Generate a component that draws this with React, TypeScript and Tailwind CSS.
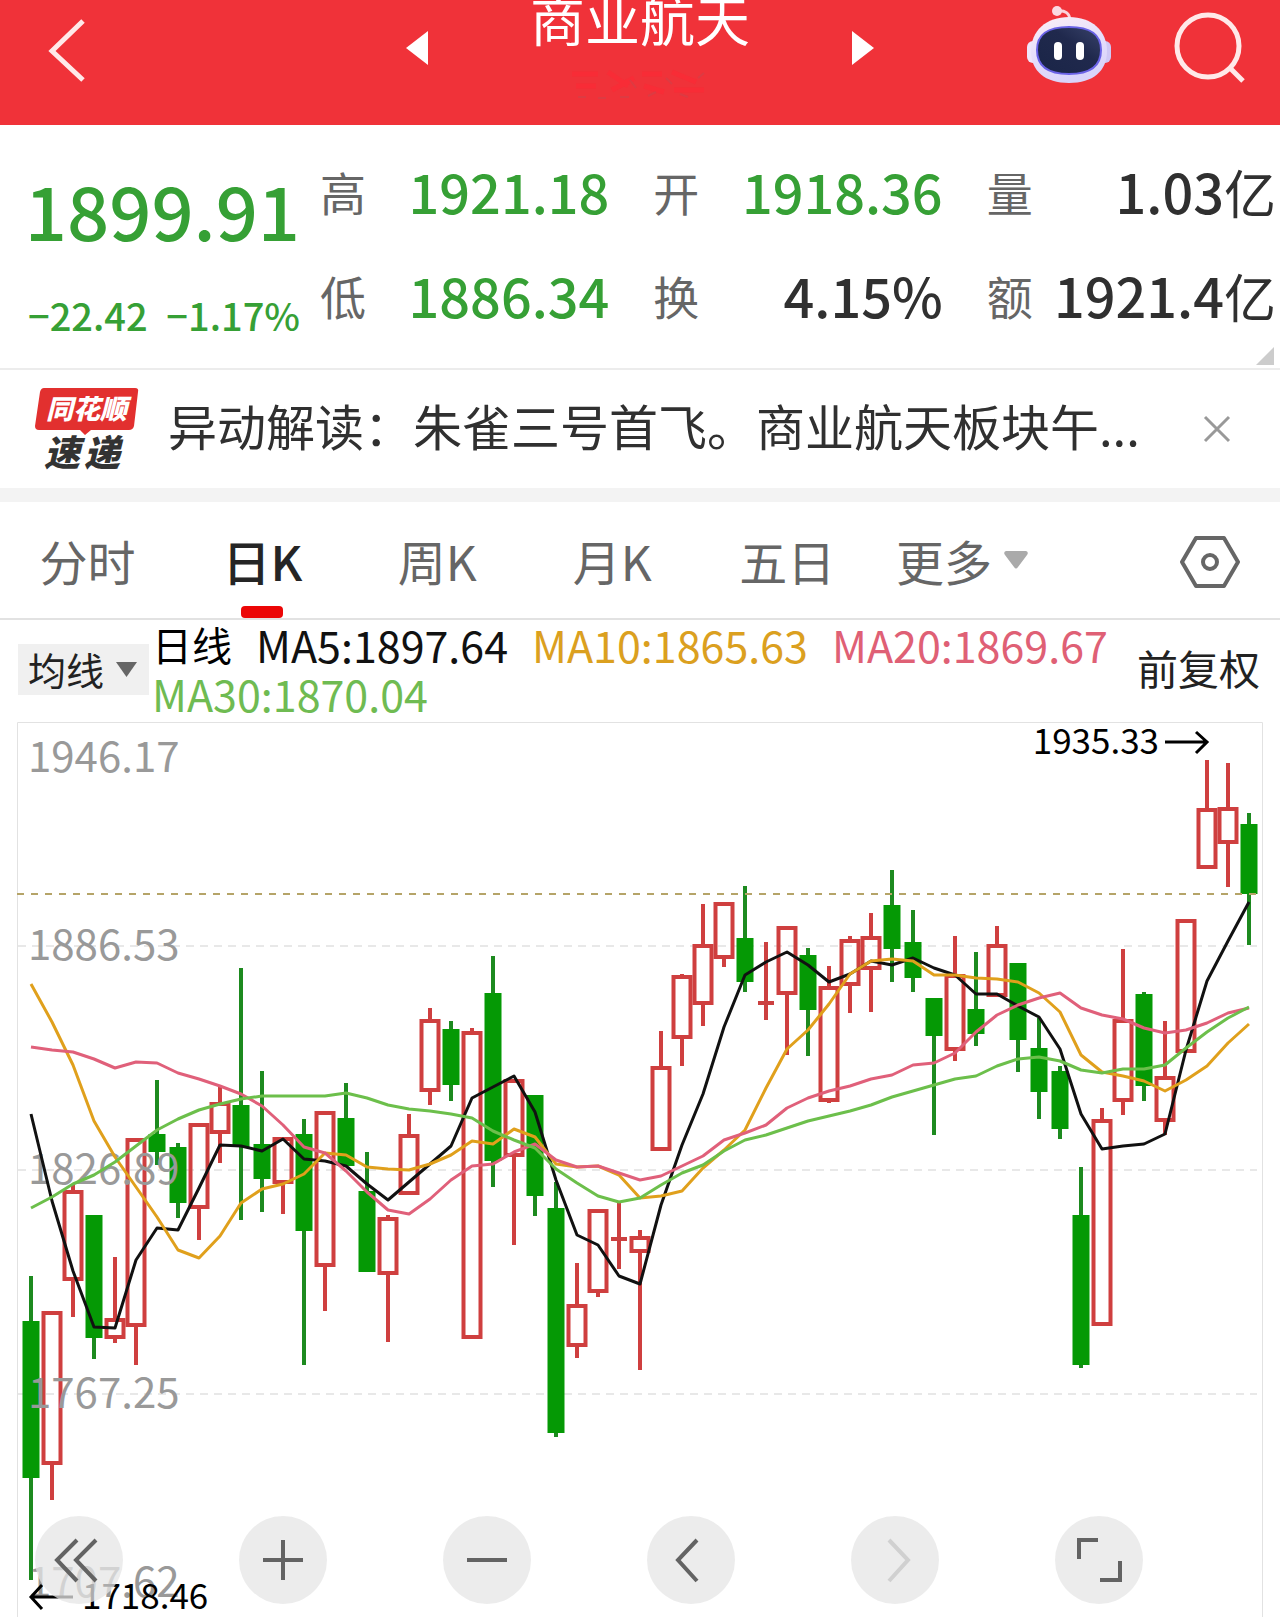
import type { ReactNode } from "react";

type Candle = {
  up: boolean;
  high: number;
  top: number;
  bottom: number;
  low: number;
};

const FONT = '"Noto Sans CJK SC", "Noto Sans", sans-serif';
const FIRST_X = 31;
const STEP = 21;

const c = (
  kind: "up" | "down",
  high: number,
  top: number,
  bottom: number,
  low: number
): Candle => ({ up: kind === "up", high, top, bottom, low });

// high, body top, body bottom, low in chart units
const candles: Candle[] = [
  c("down", 1276, 1321, 1478, 1580),
  c("up", 1311, 1311, 1465, 1500),
  c("up", 1184, 1190, 1281, 1317),
  c("down", 1215, 1215, 1338, 1359),
  c("up", 1257, 1318, 1339, 1343),
  c("up", 1138, 1138, 1327, 1365),
  c("down", 1080, 1134, 1152, 1165),
  c("down", 1143, 1147, 1203, 1218),
  c("up", 1123, 1123, 1209, 1240),
  c("up", 1087, 1102, 1134, 1163),
  c("down", 968, 1105, 1147, 1220),
  c("down", 1071, 1144, 1179, 1212),
  c("up", 1137, 1137, 1184, 1214),
  c("down", 1119, 1134, 1231, 1365),
  c("up", 1111, 1111, 1267, 1311),
  c("down", 1083, 1118, 1166, 1166),
  c("down", 1152, 1191, 1272, 1272),
  c("up", 1215, 1217, 1275, 1342),
  c("up", 1114, 1134, 1195, 1195),
  c("up", 1008, 1019, 1092, 1105),
  c("down", 1021, 1029, 1085, 1101),
  c("up", 1028, 1031, 1339, 1339),
  c("down", 956, 993, 1161, 1187),
  c("up", 1079, 1079, 1157, 1245),
  c("down", 1095, 1095, 1196, 1216),
  c("down", 1182, 1208, 1433, 1437),
  c("up", 1263, 1304, 1347, 1358),
  c("up", 1209, 1209, 1293, 1297),
  c("up", 1201, 1239, 1239, 1269),
  c("up", 1230, 1236, 1253, 1370),
  c("up", 1031, 1066, 1151, 1151),
  c("up", 974, 975, 1039, 1066),
  c("up", 904, 944, 1005, 1026),
  c("up", 902, 902, 959, 967),
  c("down", 886, 938, 982, 992),
  c("up", 942, 1003, 1003, 1020),
  c("up", 926, 926, 995, 1055),
  c("down", 948, 955, 1010, 1056),
  c("up", 966, 986, 1102, 1103),
  c("up", 936, 939, 986, 1013),
  c("up", 913, 936, 970, 1012),
  c("down", 870, 905, 949, 982),
  c("down", 910, 942, 978, 992),
  c("down", 998, 998, 1036, 1135),
  c("up", 936, 974, 1051, 1061),
  c("down", 952, 1009, 1034, 1046),
  c("up", 926, 944, 997, 997),
  c("down", 963, 963, 1040, 1072),
  c("down", 1018, 1048, 1092, 1119),
  c("down", 1066, 1071, 1129, 1139),
  c("down", 1167, 1215, 1365, 1368),
  c("up", 1108, 1119, 1326, 1326),
  c("up", 949, 1019, 1102, 1115),
  c("down", 992, 994, 1086, 1101),
  c("up", 1021, 1076, 1122, 1135),
  c("up", 919, 919, 1053, 1053),
  c("up", 760, 808, 869, 869),
  c("up", 763, 807, 844, 887),
  c("down", 813, 824, 894, 945),
];

const averages = [
  {
    name: "MA5",
    value: "1897.64",
    text: "text-[#111111]",
    stroke: "#111111",
    points: [
      1114, 1201, 1271, 1327, 1328, 1260, 1228, 1230, 1188, 1145, 1146, 1151,
      1139, 1159, 1161, 1166, 1184, 1200, 1182, 1164, 1146, 1098, 1087, 1076,
      1112, 1180, 1235, 1245, 1276, 1284, 1205, 1145, 1094, 1027, 975, 962, 952,
      965, 982, 974, 961, 965, 958, 968, 975, 994, 994, 1006, 1017, 1049, 1114,
      1149, 1146, 1144, 1134, 1050, 981, 941, 902,
    ],
  },
  {
    name: "MA10",
    value: "1865.63",
    text: "text-[#dba01f]",
    stroke: "#e0a01c",
    points: [
      984, 1022, 1065, 1121, 1157, 1187, 1217, 1250, 1258, 1236, 1203, 1189,
      1184, 1174, 1153, 1155, 1167, 1169, 1170, 1164, 1155, 1141, 1144, 1129,
      1137, 1164, 1167, 1166, 1175, 1198, 1196, 1191, 1168, 1150, 1130, 1088,
      1049, 1030, 1004, 974, 961, 959, 961, 975, 975, 978, 979, 982, 993, 1012,
      1055, 1072, 1076, 1081, 1091, 1080, 1066, 1043, 1024,
    ],
  },
  {
    name: "MA20",
    value: "1869.67",
    text: "text-[#df6075]",
    stroke: "#e0607a",
    points: [
      1047, 1050, 1052, 1059, 1068, 1062, 1063, 1073, 1079, 1086, 1094, 1106,
      1125, 1147, 1153, 1171, 1192, 1210, 1214, 1199, 1180, 1166, 1164, 1152,
      1144, 1160, 1167, 1166, 1173, 1180, 1176, 1166, 1156, 1140, 1133, 1125,
      1108, 1098, 1091, 1086, 1079, 1075, 1065, 1063, 1053, 1032, 1015, 1005,
      998, 993, 1008, 1015, 1019, 1028, 1033, 1030, 1023, 1013, 1008,
    ],
  },
  {
    name: "MA30",
    value: "1870.04",
    text: "text-[#6fbb52]",
    stroke: "#6cbf4b",
    points: [
      1208, 1197, 1184, 1175, 1162, 1146, 1130, 1119, 1110, 1104, 1099, 1096,
      1096, 1096, 1096, 1093, 1098, 1105, 1109, 1111, 1114, 1118, 1131, 1140,
      1148, 1169, 1183, 1196, 1202, 1198, 1185, 1173, 1165, 1151, 1140, 1135,
      1128, 1121, 1116, 1111, 1105, 1097, 1091, 1085, 1079, 1076, 1066, 1059,
      1057, 1061, 1070, 1073, 1069, 1069, 1065, 1048, 1032, 1018, 1007,
    ],
  },
];

const axisLabels = [
  { text: "1946.17", y: 772 },
  { text: "1886.53", y: 960 },
  { text: "1826.89", y: 1184 },
  { text: "1767.25", y: 1408 },
  { text: "1707.62", y: 1597 },
];

const quotes = [
  { label: "高", value: "1921.18", unit: "", color: "text-[#36a035]" },
  { label: "开", value: "1918.36", unit: "", color: "text-[#36a035]" },
  { label: "量", value: "1.03", unit: "亿", color: "text-[#303030]" },
  { label: "低", value: "1886.34", unit: "", color: "text-[#36a035]" },
  { label: "换", value: "4.15%", unit: "", color: "text-[#303030]" },
  { label: "额", value: "1921.4", unit: "亿", color: "text-[#303030]" },
];

const tabs = ["分时", "日K", "周K", "月K", "五日"];

const Header = () => (
  <header className="grid h-[125px] grid-cols-[1fr_468px_1fr] overflow-hidden bg-[#f03239] text-white">
    <div className="pt-4 pl-12">
      <button type="button" aria-label="返回" className="block">
        <svg width="40" height="68" viewBox="0 0 40 68" fill="none">
          <path d="M35 5 4 35 35 64" stroke="#ffe9e9" strokeWidth="5" />
        </svg>
      </button>
    </div>
    <div className="flex items-start justify-between">
      <button type="button" aria-label="上一个" className="pt-[31px]">
        <svg width="22" height="34" viewBox="0 0 22 34">
          <path d="M0 17 22 0V34Z" fill="#fff" />
        </svg>
      </button>
      <div className="flex flex-col items-center">
        <h1 className="text-[55px] leading-[34px] whitespace-nowrap">
          商业航天
        </h1>
        <svg
          className="mt-8"
          width="144"
          height="36"
          viewBox="0 0 144 36"
          fill="none"
          aria-hidden="true"
        >
          <g stroke="#fb2a35" strokeWidth="5" opacity="0.7">
            <path d="M4 8h26M8 20h20M40 6l20 14M44 24l22-12M74 8h20M76 20l20 6M104 6l24 10M106 24h30" />
          </g>
          <g stroke="#c9444c" strokeWidth="2" opacity="0.5">
            <path d="M10 31h8M30 32h8M52 31h9M62 14l6 8M80 30l8-4M98 12l6 6M112 28l8 3M130 12l6-5" />
          </g>
        </svg>
      </div>
      <button type="button" aria-label="下一个" className="pt-[31px]">
        <svg width="22" height="34" viewBox="0 0 22 34">
          <path d="M22 17 0 0V34Z" fill="#fff" />
        </svg>
      </button>
    </div>
    <div className="flex items-start justify-end gap-[62px] pr-[34px]">
      <button type="button" aria-label="智能助手" className="pt-1">
        <svg width="86" height="80" viewBox="0 0 86 80">
          <defs>
            <linearGradient id="shell" x1="0" y1="0" x2="0.4" y2="1">
              <stop offset="0" stopColor="#fdeff6" />
              <stop offset="0.55" stopColor="#e6defb" />
              <stop offset="1" stopColor="#d9d4fa" />
            </linearGradient>
            <linearGradient id="visor" x1="0" y1="1" x2="1" y2="0">
              <stop offset="0" stopColor="#1a2547" />
              <stop offset="0.6" stopColor="#20294d" />
              <stop offset="1" stopColor="#39436b" />
            </linearGradient>
          </defs>
          <path
            d="M31 7c8-1 13 2 13 10"
            fill="none"
            stroke="#fbd3dc"
            strokeWidth="3"
          />
          <circle cx="31" cy="7" r="5" fill="#fbd9e2" />
          <rect x="1" y="37" width="12" height="22" rx="6" fill="#efe6fb" />
          <rect x="73" y="37" width="12" height="22" rx="6" fill="#cfc8f5" />
          <path
            d="M43 13C66 13 81 27 81 47S67 79 43 79 5 67 5 47 20 13 43 13Z"
            fill="url(#shell)"
          />
          <path
            d="M43 23c20 0 32 6 32 23s-12 24-32 24-32-7-32-24 12-23 32-23Z"
            fill="url(#visor)"
            stroke="#6a62e6"
            strokeWidth="2"
          />
          <rect x="28" y="38" width="8" height="18" rx="4" fill="#fff" />
          <rect x="50" y="38" width="8" height="18" rx="4" fill="#fff" />
        </svg>
      </button>
      <button type="button" aria-label="搜索" className="pt-[10px]">
        <svg width="72" height="74" viewBox="0 0 72 74" fill="none">
          <g stroke="#ffe9e9" strokeWidth="5">
            <circle cx="34" cy="36" r="31" />
            <path d="M56 58 69 71" />
          </g>
        </svg>
      </button>
    </div>
  </header>
);

const QuotePanel = () => (
  <section className="relative flex border-b-2 border-[#ececec] pt-3 pb-[3px]">
    <div className="w-[320px] shrink-0 pr-5 text-[#36a035]">
      <div className="pt-4 text-right text-[74px] leading-[112px] font-medium">
        1899.91
      </div>
      <div className="flex justify-between pl-7 text-[38px] leading-[100px] font-medium">
        <span>−22.42</span>
        <span>−1.17%</span>
      </div>
    </div>
    <dl className="grid flex-1 grid-cols-3 content-start gap-x-11 pt-[2px] pr-1">
      {quotes.map((q) => (
        <div
          key={q.label}
          className="flex h-[104px] items-center justify-between whitespace-nowrap"
        >
          <dt className="text-[46px] leading-[64px] text-[#666666]">
            {q.label}
          </dt>
          <dd className={`text-[54px] leading-[64px] font-medium ${q.color}`}>
            {q.value}
            {q.unit && (
              <span className="text-[52px] leading-none font-normal">
                {q.unit}
              </span>
            )}
          </dd>
        </div>
      ))}
    </dl>
    <svg
      className="absolute right-[6px] bottom-[3px]"
      width="18"
      height="18"
      viewBox="0 0 18 18"
      aria-hidden="true"
    >
      <path d="M18 0V18H0Z" fill="#cccccc" />
    </svg>
  </section>
);

const NewsBar = () => (
  <section className="box-content flex h-[118px] items-center border-b-[14px] border-[#f3f3f3] pl-[35px]">
    <svg width="104" height="90" viewBox="0 0 104 90" className="shrink-0">
      <path
        d="M9 4H100Q104 4 103 8L99 42Q98 46 94 46H56L50 51 45 46H4Q0 46 0 42L5 8Q6 4 9 4Z"
        fill="#e2302f"
      />
      <g fontFamily={FONT} fontStyle="italic" fontWeight="900">
        <text x="11" y="35" fontSize="27" fill="#fff">
          同花顺
        </text>
        <text x="9" y="82" fontSize="36" fill="#333333">
          速
        </text>
        <text x="49" y="82" fontSize="36" fill="#333333">
          递
        </text>
      </g>
    </svg>
    <a
      href="#news"
      className="ml-[29px] min-w-0 flex-1 overflow-hidden pb-2 text-[49px] leading-[72px] whitespace-nowrap text-[#303030]"
    >
      异动解读：朱雀三号首飞。商业航天板块午...
    </a>
    <button type="button" aria-label="关闭" className="mr-[49px] ml-4">
      <svg width="28" height="28" viewBox="0 0 28 28" fill="none">
        <path d="M2 2 26 26M26 2 2 26" stroke="#999999" strokeWidth="3" />
      </svg>
    </button>
  </section>
);

const TabBar = () => (
  <nav className="flex items-center justify-between border-b-2 border-[#e2e2e2] text-[48px]">
    <div className="grid w-[82%] grid-cols-6">
      {tabs.map((t) => (
        <button
          key={t}
          type="button"
          className={
            t === "日K"
              ? "flex flex-col items-center font-medium text-[#252525]"
              : "flex flex-col items-center text-[#666666]"
          }
        >
          <span className="pt-3 leading-[92px]">{t}</span>
          {t === "日K" && (
            <span className="h-3 w-[42px] rounded-sm bg-[#ec0606]" />
          )}
        </button>
      ))}
      <button
        type="button"
        className="flex items-center justify-center gap-3 pb-3 text-[#666666]"
      >
        <span className="pt-3 leading-[92px] whitespace-nowrap">更多</span>
        <svg width="24" height="18" viewBox="0 0 24 18" className="mt-3">
          <path
            d="M2 0H22Q25 1 23 4L14 16Q12 19 10 16L1 4Q-1 1 2 0Z"
            fill="#aaaaaa"
          />
        </svg>
      </button>
    </div>
    <button type="button" aria-label="设置" className="mt-1 mr-10">
      <svg width="60" height="54" viewBox="0 0 60 54" fill="none">
        <g stroke="#666666" strokeWidth="4" strokeLinejoin="round">
          <path d="M16 3H44L58 27 44 51H16L2 27Z" />
          <circle cx="30" cy="27" r="7" />
        </g>
      </svg>
    </button>
  </nav>
);

const Legend = () => (
  <section className="flex items-center pr-5 pb-1 pl-[18px]">
    <button
      type="button"
      className="flex h-[51px] w-[131px] shrink-0 items-center justify-between bg-[#f0f0f0] pr-3 pl-[10px] text-[38px] leading-[48px] text-[#222222]"
    >
      均线
      <svg width="21" height="15" viewBox="0 0 21 15">
        <path d="M0 0H21L10.5 15Z" fill="#666666" />
      </svg>
    </button>
    <div className="flex flex-1 flex-wrap gap-x-6 pl-[3px] text-[43px] leading-[49px] whitespace-nowrap">
      <span className="text-[40px] text-black">日线</span>
      {averages.map((a) => (
        <span key={a.name} className={a.text}>
          {a.name}:{a.value}
        </span>
      ))}
    </div>
    <button
      type="button"
      className="pb-1 text-[41px] leading-[48px] text-[#222222]"
    >
      前复权
    </button>
  </section>
);

const CandleShape = ({ candle, x }: { candle: Candle; x: number }) => {
  const { up, high, top, bottom, low } = candle;
  if (!up) {
    return (
      <g fill="#059905">
        <rect x={x - 2} y={high} width="4" height={low - high} fill="#1d8a1f" />
        <rect x={x - 8.5} y={top} width="17" height={bottom - top} />
      </g>
    );
  }
  if (top === bottom) {
    return (
      <g stroke="#cc4040" strokeWidth="4">
        <path d={`M${x} ${high}V${low}M${x - 8} ${top}H${x + 8}`} />
      </g>
    );
  }
  return (
    <g stroke="#cf3f3f" strokeWidth="4" fill="none">
      <path d={`M${x} ${high}V${top + 1}M${x} ${bottom - 1}V${low}`} />
      <rect x={x - 8.5} y={top + 2} width="17" height={bottom - top - 4} />
    </g>
  );
};

const KLineChart = () => (
  <svg
    viewBox="0 722 1280 895"
    className="block w-full"
    fill="none"
    role="img"
    aria-label="日K线图"
  >
    <path d="M17.5 1617V722.5H1262.5V1617" stroke="#e2e2e2" />
    <g stroke="#e8e8e8" strokeWidth="2" strokeDasharray="8 6">
      <path d="M18 946H1257M18 1170H1257M18 1394H1257" />
    </g>
    {candles.map((candle, i) => (
      <CandleShape key={i} candle={candle} x={FIRST_X + i * STEP} />
    ))}
    <path
      d="M17 894H1257"
      stroke="#b5a468"
      strokeWidth="2"
      strokeDasharray="7 7"
    />
    <g fontFamily={FONT} fontSize="42" fill="#999999">
      {axisLabels.map((l) => (
        <text key={l.text} x="28" y={l.y}>
          {l.text}
        </text>
      ))}
    </g>
    {averages.map((a) => (
      <polyline
        key={a.name}
        points={a.points.map((y, i) => `${FIRST_X + i * STEP},${y}`).join(" ")}
        stroke={a.stroke}
        strokeWidth="3"
        strokeLinejoin="round"
      />
    ))}
    <g fontFamily={FONT} fontSize="35" fill="#000">
      <text x="1159" y="754" textAnchor="end">
        1935.33
      </text>
      <text x="82" y="1609">
        1718.46
      </text>
    </g>
    <g stroke="#000" strokeWidth="3">
      <path d="M1165 742H1207M1196 732 1207 742 1196 753" />
      <path d="M73 1597H31M42 1585 31 1597 42 1609" />
    </g>
  </svg>
);

const RoundButton = ({
  label,
  disabled,
  children,
}: {
  label: string;
  disabled?: boolean;
  children: ReactNode;
}) => (
  <button
    type="button"
    aria-label={label}
    disabled={disabled}
    className="size-[88px] rounded-full bg-[#e6e6e6]/75"
  >
    <svg
      viewBox="0 0 88 88"
      fill="none"
      stroke={disabled ? "#d0d0d0" : "#636363"}
      strokeWidth="4"
    >
      {children}
    </svg>
  </button>
);

const ChartControls = () => (
  <div className="absolute right-[137px] bottom-[13px] left-[35px] flex justify-between">
    <RoundButton label="展开">
      <path d="M42 24 22 44 42 65M61 24 41 44 61 65" />
    </RoundButton>
    <RoundButton label="放大">
      <path d="M24 44H64M44 24V64" />
    </RoundButton>
    <RoundButton label="缩小">
      <path d="M24 44H64" />
    </RoundButton>
    <RoundButton label="向左">
      <path d="M50 24 31 44 50 65" />
    </RoundButton>
    <RoundButton label="向右" disabled>
      <path d="M38 24 57 44 38 65" />
    </RoundButton>
    <RoundButton label="全屏">
      <path d="M43 24H24V43M45 64H65V45" />
    </RoundButton>
  </div>
);

const App = () => {
  return (
    <main className='min-h-screen overflow-hidden bg-white font-["Noto_Sans_CJK_SC","Noto_Sans",sans-serif]'>
      <Header />
      <QuotePanel />
      <NewsBar />
      <TabBar />
      <Legend />
      <section className="relative">
        <KLineChart />
        <ChartControls />
      </section>
    </main>
  );
};

export default App;
